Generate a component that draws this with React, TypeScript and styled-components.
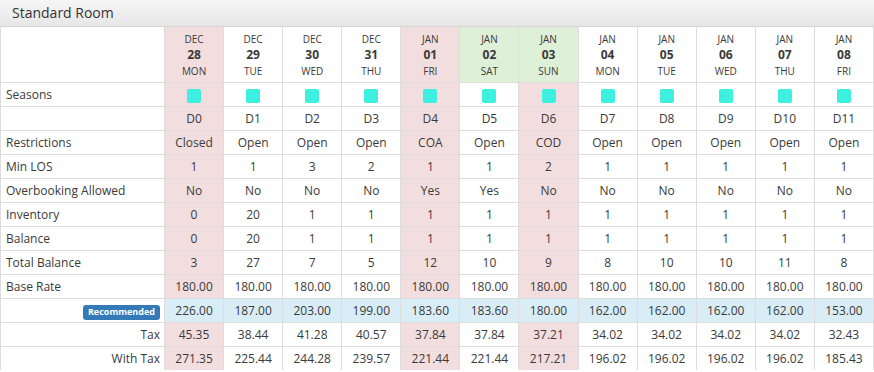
import React from "react";
import styled, { createGlobalStyle } from "styled-components";

type Tone = "plain" | "closed" | "weekend";

interface Day {
  month: string;
  date: string;
  weekday: string;
  head: Tone;
  body: Tone;
}

const days: Day[] = [
  { month: "DEC", date: "28", weekday: "MON", head: "closed", body: "closed" },
  { month: "DEC", date: "29", weekday: "TUE", head: "plain", body: "plain" },
  { month: "DEC", date: "30", weekday: "WED", head: "plain", body: "plain" },
  { month: "DEC", date: "31", weekday: "THU", head: "plain", body: "plain" },
  { month: "JAN", date: "01", weekday: "FRI", head: "closed", body: "closed" },
  { month: "JAN", date: "02", weekday: "SAT", head: "weekend", body: "plain" },
  { month: "JAN", date: "03", weekday: "SUN", head: "weekend", body: "closed" },
  { month: "JAN", date: "04", weekday: "MON", head: "plain", body: "plain" },
  { month: "JAN", date: "05", weekday: "TUE", head: "plain", body: "plain" },
  { month: "JAN", date: "06", weekday: "WED", head: "plain", body: "plain" },
  { month: "JAN", date: "07", weekday: "THU", head: "plain", body: "plain" },
  { month: "JAN", date: "08", weekday: "FRI", head: "plain", body: "plain" },
];

const rows: { label: string; values: string[] }[] = [
  { label: "", values: days.map((_, i) => `D${i}`) },
  {
    label: "Restrictions",
    values: ["Closed", "Open", "Open", "Open", "COA", "Open", "COD", "Open", "Open", "Open", "Open", "Open"],
  },
  { label: "Min LOS", values: ["1", "1", "3", "2", "1", "1", "2", "1", "1", "1", "1", "1"] },
  {
    label: "Overbooking Allowed",
    values: ["No", "No", "No", "No", "Yes", "Yes", "No", "No", "No", "No", "No", "No"],
  },
  { label: "Inventory", values: ["0", "20", "1", "1", "1", "1", "1", "1", "1", "1", "1", "1"] },
  { label: "Balance", values: ["0", "20", "1", "1", "1", "1", "1", "1", "1", "1", "1", "1"] },
  { label: "Total Balance", values: ["3", "27", "7", "5", "12", "10", "9", "8", "10", "10", "11", "8"] },
  { label: "Base Rate", values: Array(12).fill("180.00") },
];

const recommended = [
  "226.00", "187.00", "203.00", "199.00", "183.60", "183.60",
  "180.00", "162.00", "162.00", "162.00", "162.00", "153.00",
];
const tax = [
  "45.35", "38.44", "41.28", "40.57", "37.84", "37.84",
  "37.21", "34.02", "34.02", "34.02", "34.02", "32.43",
];
const withTax = [
  "271.35", "225.44", "244.28", "239.57", "221.44", "221.44",
  "217.21", "196.02", "196.02", "196.02", "196.02", "185.43",
];

const GlobalStyle = createGlobalStyle`
  body {
    margin: 0;
    background: #fff;
    font-family: "Open Sans", "Liberation Sans", sans-serif;
    color: #3a3a3a;
  }
`;

const Panel = styled.div`
  width: 874px;
  background: #fff;
`;

const PanelHeading = styled.div`
  height: 27px;
  box-sizing: border-box;
  padding: 3px 12px 0;
  font-size: 14px;
  color: #333;
  background: linear-gradient(to bottom, #f6f6f6 0%, #e6e6e6 100%);
  border-bottom: 1px solid #d6d6d6;
`;

const Grid = styled.table`
  width: 874px;
  border-collapse: collapse;
  table-layout: fixed;
  font-size: 12px;
  border-left: 1px solid #ddd;
`;

const toneColor = (tone: Tone) =>
  tone === "closed" ? "#f2dede" : tone === "weekend" ? "#dff0d8" : "transparent";

const Cell = styled.td<{ $tone?: Tone; $info?: boolean }>`
  height: 23px;
  padding: 0 2px;
  text-align: center;
  vertical-align: middle;
  border-top: 1px solid #ddd;
  border-right: 1px solid #ddd;
  background: ${(p) => (p.$info ? "#d9edf7" : toneColor(p.$tone ?? "plain"))};
  white-space: nowrap;
`;

const LabelCell = styled.td<{ $right?: boolean }>`
  width: 156px;
  height: 23px;
  padding: 0 4px 0 5px;
  text-align: ${(p) => (p.$right ? "right" : "left")};
  vertical-align: middle;
  border-top: 1px solid #ddd;
  border-right: 1px solid #ddd;
  white-space: nowrap;
`;

const HeadCell = styled.th<{ $tone: Tone }>`
  height: 55px;
  padding: 0;
  font-weight: normal;
  text-align: center;
  vertical-align: middle;
  border-right: 1px solid #ddd;
  background: ${(p) => toneColor(p.$tone)};
`;

const BlankHead = styled.th`
  width: 161px;
  border-right: 1px solid #ddd;
`;

const DateStack = styled.div`
  display: flex;
  flex-direction: column;
  align-items: center;
  gap: 2px;
  line-height: 14px;
  padding-top: 1px;
`;

const Small = styled.span`
  font-size: 10px;
`;

const Bold = styled.span`
  font-size: 12px;
  font-weight: 700;
`;

const Swatch = styled.span`
  display: inline-block;
  width: 14px;
  height: 14px;
  border-radius: 2px;
  background: #3ef0e0;
  vertical-align: middle;
`;

const Badge = styled.span`
  display: inline-block;
  padding: 2px 5px 3px;
  border-radius: 3px;
  background: #337ab7;
  color: #fff;
  font-size: 9px;
  font-weight: 700;
  line-height: 10px;
`;

const App: React.FC = () => {
  return (
    <>
      <GlobalStyle />
      <Panel>
        <PanelHeading>Standard Room</PanelHeading>
        <Grid>
          <thead>
            <tr>
              <BlankHead />
              {days.map((d) => (
                <HeadCell key={d.month + d.date} $tone={d.head}>
                  <DateStack>
                    <Small>{d.month}</Small>
                    <Bold>{d.date}</Bold>
                    <Small>{d.weekday}</Small>
                  </DateStack>
                </HeadCell>
              ))}
            </tr>
          </thead>
          <tbody>
            <tr>
              <LabelCell>Seasons</LabelCell>
              {days.map((d, i) => (
                <Cell key={i} $tone={d.body}>
                  <Swatch />
                </Cell>
              ))}
            </tr>
            {rows.map((r, ri) => (
              <tr key={ri}>
                <LabelCell>{r.label}</LabelCell>
                {r.values.map((v, i) => (
                  <Cell key={i} $tone={days[i].body}>
                    {v}
                  </Cell>
                ))}
              </tr>
            ))}
            <tr>
              <LabelCell $right>
                <Badge>Recommended</Badge>
              </LabelCell>
              {recommended.map((v, i) => (
                <Cell key={i} $info>
                  {v}
                </Cell>
              ))}
            </tr>
            <tr>
              <LabelCell $right>Tax</LabelCell>
              {tax.map((v, i) => (
                <Cell key={i} $tone={days[i].body}>
                  {v}
                </Cell>
              ))}
            </tr>
            <tr>
              <LabelCell $right>With Tax</LabelCell>
              {withTax.map((v, i) => (
                <Cell key={i} $tone={days[i].body}>
                  {v}
                </Cell>
              ))}
            </tr>
          </tbody>
        </Grid>
      </Panel>
    </>
  );
};

export default App;
